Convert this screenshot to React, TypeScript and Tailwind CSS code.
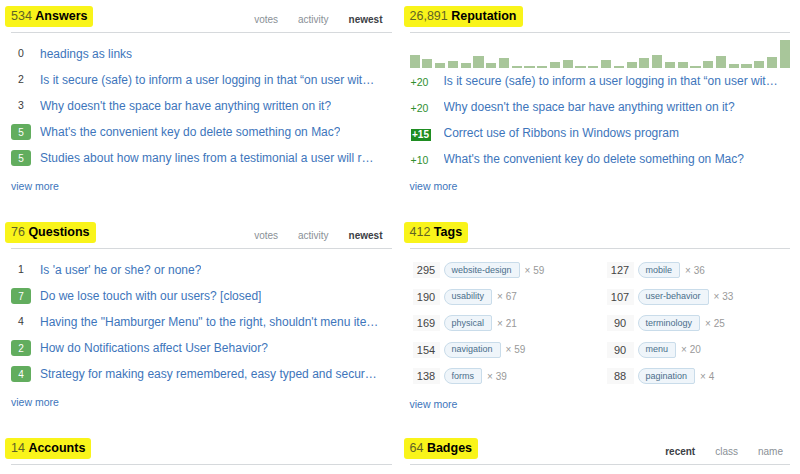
import React from "react"

const answers = [
  { score: 0, accepted: false, title: "headings as links" },
  { score: 2, accepted: false, title: "Is it secure (safe) to inform a user logging in that “on user wit…" },
  { score: 3, accepted: false, title: "Why doesn't the space bar have anything written on it?" },
  { score: 5, accepted: true, title: "What's the convenient key do delete something on Mac?" },
  { score: 5, accepted: true, title: "Studies about how many lines from a testimonial a user will r…" },
]

const questions = [
  { score: 1, accepted: false, title: "Is 'a user' he or she? or none?" },
  { score: 7, accepted: true, title: "Do we lose touch with our users? [closed]" },
  { score: 4, accepted: false, title: "Having the \"Hamburger Menu\" to the right, shouldn't menu ite…" },
  { score: 2, accepted: true, title: "How do Notifications affect User Behavior?" },
  { score: 4, accepted: true, title: "Strategy for making easy remembered, easy typed and secur…" },
]

const rep = [
  { amount: "+20", accepted: false, title: "Is it secure (safe) to inform a user logging in that “on user wit…" },
  { amount: "+20", accepted: false, title: "Why doesn't the space bar have anything written on it?" },
  { amount: "+15", accepted: true, title: "Correct use of Ribbons in Windows program" },
  { amount: "+10", accepted: false, title: "What's the convenient key do delete something on Mac?" },
]

const bars = [13, 9, 5, 7, 5, 12, 5, 10, 2, 2, 2, 6, 8, 2, 2, 8, 2, 6, 10, 13, 6, 6, 2, 7, 12, 4, 4, 7, 11, 28]

const tags = [
  { score: 295, name: "website-design", count: 59 },
  { score: 127, name: "mobile", count: 36 },
  { score: 190, name: "usability", count: 67 },
  { score: 107, name: "user-behavior", count: 33 },
  { score: 169, name: "physical", count: 21 },
  { score: 90, name: "terminology", count: 25 },
  { score: 154, name: "navigation", count: 59 },
  { score: 90, name: "menu", count: 20 },
  { score: 138, name: "forms", count: 39 },
  { score: 88, name: "pagination", count: 4 },
]

function Header({ count, title, tabs, active, tabPad = "pr-[9px]" }: { count: string; title: string; tabs?: string[]; active?: string; tabPad?: string }) {
  return (
    <div className="h-[33px] flex items-center justify-between border-b border-[#d6d9dc]">
      <span className="-ml-[6px] px-[6px] py-[3px] bg-[#f9f41a] rounded-[3px] text-[12.5px] leading-[15px]">
        <span className="text-[#5f6326]">{count}</span> <span className="font-bold text-black">{title}</span>
      </span>
      {tabs && (
        <div className={`flex gap-[20px] pt-[6px] text-[10px] ${tabPad}`}>
          {tabs.map((t) => (
            <span key={t} className={t === active ? "font-bold text-[#3b4045]" : "text-[#8a9096]"}>
              {t}
            </span>
          ))}
        </div>
      )}
    </div>
  )
}

function ViewMore() {
  return <a className="block pt-[7px] text-[10.5px] leading-[16px] text-[#3d75bb]">view more</a>
}

function PostRow({ score, accepted, title }: { score: number; accepted: boolean; title: string }) {
  return (
    <div className="h-[26px] flex items-center">
      <div className="w-[20px] flex justify-center shrink-0">
        {accepted ? (
          <span className="w-[20px] h-[16px] rounded-[3px] bg-[#62ad5e] text-white text-[10px] flex items-center justify-center">
            {score}
          </span>
        ) : (
          <span className="text-[10.5px] text-[#3b3b3b]">{score}</span>
        )}
      </div>
      <a className="ml-[9px] text-[12px] text-[#3d75bb] truncate">{title}</a>
    </div>
  )
}

export default function App() {
  return (
    <div className="w-[800px] h-[474px] overflow-hidden bg-white font-['Liberation_Sans',Arial,sans-serif]">
      <div className="grid grid-cols-2 gap-x-[18px] pl-[11px] pr-[10px]">
        {/* Answers */}
        <section className="h-[216px]">
          <Header count="534" title="Answers" tabs={["votes", "activity", "newest"]} active="newest" />
          <div className="pt-[8px]">
            {answers.map((a, i) => (
              <PostRow key={i} {...a} />
            ))}
          </div>
          <ViewMore />
        </section>

        {/* Reputation */}
        <section className="h-[216px]">
          <Header count="26,891" title="Reputation" />
          <div className="h-[35px] flex items-end gap-[2.6px]">
            {bars.map((h, i) => (
              <div key={i} className="flex-1 bg-[#a8c69a]" style={{ height: h }} />
            ))}
          </div>
          {rep.map((r, i) => (
            <div key={i} className="h-[26px] flex items-center">
              <div className="w-[34px] shrink-0 pl-[1px]">
                {r.accepted ? (
                  <span className="inline-flex w-[20px] h-[12px] bg-[#1f8d22] text-white text-[10px] font-bold items-center justify-center">
                    {r.amount}
                  </span>
                ) : (
                  <span className="text-[10.5px] text-[#2f8f2f]">{r.amount}</span>
                )}
              </div>
              <a className="text-[12px] text-[#3d75bb] truncate">{r.title}</a>
            </div>
          ))}
          <div className="-mt-[1px]">
            <ViewMore />
          </div>
        </section>

        {/* Questions */}
        <section className="h-[216px]">
          <Header count="76" title="Questions" tabs={["votes", "activity", "newest"]} active="newest" />
          <div className="pt-[8px]">
            {questions.map((q, i) => (
              <PostRow key={i} {...q} />
            ))}
          </div>
          <ViewMore />
        </section>

        {/* Tags */}
        <section className="h-[216px]">
          <Header count="412" title="Tags" />
          <div className="pt-[8px] pl-[3px] grid grid-cols-[194px_1fr]">
            {tags.map((t, i) => (
              <div key={i} className="h-[26.5px] flex items-center">
                <span className="w-[27px] h-[16px] bg-[#f8f8f8] text-[11px] text-[#444] flex items-center justify-center">
                  {t.score}
                </span>
                <span className="ml-[4px] h-[16px] px-[7px] flex items-center bg-[#eff5fa] border border-[#c9dcea] rounded-l-[8px] rounded-r-[2px] text-[9px] text-[#4a6e8a]">
                  {t.name}
                </span>
                <span className="ml-[5px] text-[10px] text-[#999]">× {t.count}</span>
              </div>
            ))}
          </div>
          <div className="-mt-[1px]">
            <ViewMore />
          </div>
        </section>

        {/* Accounts */}
        <section>
          <Header count="14" title="Accounts" />
        </section>

        {/* Badges */}
        <section>
          <Header count="64" title="Badges" tabs={["recent", "class", "name"]} active="recent" tabPad="pr-[7px]" />
        </section>
      </div>
    </div>
  )
}
